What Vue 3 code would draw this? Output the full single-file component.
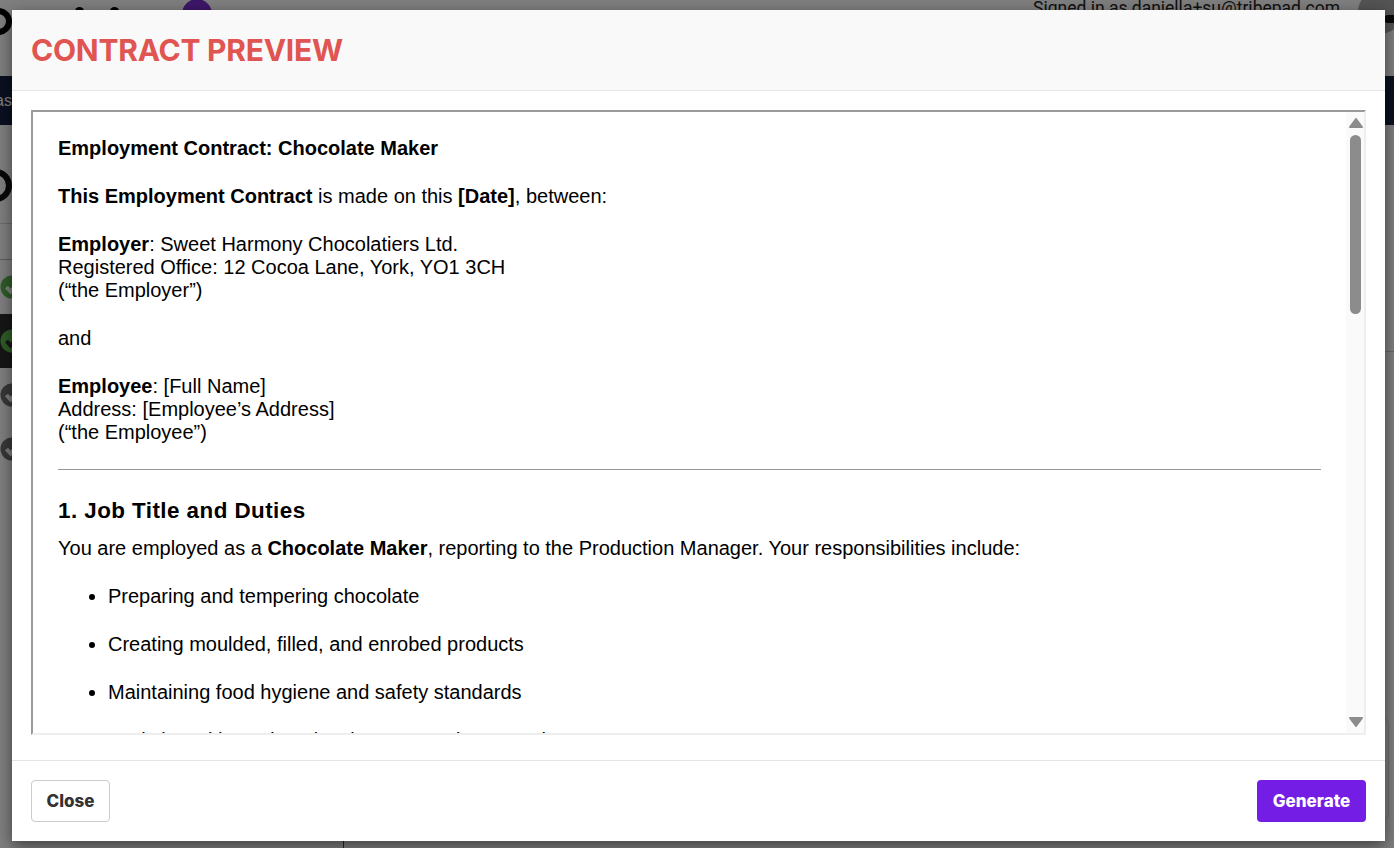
<script setup>
const duties = [
  'Preparing and tempering chocolate',
  'Creating moulded, filled, and enrobed products',
  'Maintaining food hygiene and safety standards',
  'Assisting with product development and seasonal ranges'
]
const ticks = [
  { dark: false, color: '#5fb84f' },
  { dark: true, color: '#5fb84f' },
  { dark: false, color: '#707070' },
  { dark: false, color: '#707070' }
]
</script>

<template>
  <div class="page">
    <header class="topbar">
      <span class="logo"></span>
      <span class="dot dot-a"></span>
      <span class="dot dot-b"></span>
      <span class="avatar"></span>
      <span class="signed">Signed in as daniella+su@tribepad.com</span>
      <span class="user"><span class="shoulders"></span></span>
    </header>
    <nav class="navbar"><span class="nav-text">as</span></nav>
    <div class="side">
      <div class="big-ring"></div>
      <div class="rule first"></div>
      <div class="rule second"></div>
      <div class="rows">
        <div v-for="(t, i) in ticks" :key="i" class="row" :class="{ dark: t.dark }">
          <svg width="28" height="28" viewBox="0 0 28 28" class="tick">
            <circle cx="12" cy="14" r="11.5" :fill="t.color"/>
            <path d="M6.5 14 L10.5 18.5 L19 9" fill="none" :stroke="t.dark ? '#2c2c2c' : '#ffffff'" stroke-width="4"/>
          </svg>
        </div>
      </div>
    </div>
    <div class="right-rule"></div>
    <div class="vline"></div>
    <div class="corner"></div>
    <div class="overlay"></div>

    <section class="modal">
      <div class="modal-head"><h1>CONTRACT PREVIEW</h1></div>
      <div class="modal-body">
        <div class="frame">
          <article class="doc">
            <p><b>Employment Contract: Chocolate Maker</b></p>
            <p><b>This Employment Contract</b> is made on this <b>[Date]</b>, between:</p>
            <p><b>Employer</b>: Sweet Harmony Chocolatiers Ltd.<br>Registered Office: 12 Cocoa Lane, York, YO1 3CH<br>(“the Employer”)</p>
            <p>and</p>
            <p><b>Employee</b>: [Full Name]<br>Address: [Employee’s Address]<br>(“the Employee”)</p>
            <hr>
            <h2>1. Job Title and Duties</h2>
            <p>You are employed as a <b>Chocolate Maker</b>, reporting to the Production Manager. Your responsibilities include:</p>
            <ul>
              <li v-for="d in duties" :key="d">{{ d }}</li>
            </ul>
          </article>
          <div class="scrollbar">
            <svg class="arrow" width="14" height="10" viewBox="0 0 14 10"><path d="M7 1 L13 9 H1 Z" fill="#8c8c8c" stroke="#8c8c8c" stroke-width="2" stroke-linejoin="round"/></svg>
            <div class="track"><div class="thumb"></div></div>
            <svg class="arrow" width="14" height="10" viewBox="0 0 14 10"><path d="M1 1 H13 L7 9 Z" fill="#8c8c8c" stroke="#8c8c8c" stroke-width="2" stroke-linejoin="round"/></svg>
          </div>
        </div>
      </div>
      <div class="modal-foot">
        <button class="btn close">Close</button>
        <button class="btn generate">Generate</button>
      </div>
    </section>
  </div>
</template>

<style>
html, body { margin: 0; overflow: hidden; }
</style>

<style scoped>
.page { position: relative; width: 1394px; height: 848px; overflow: hidden; background: #fff; font-family: "Liberation Sans", Arial, sans-serif; }
.topbar { height: 76px; position: relative; }
.logo { position: absolute; left: -15px; top: 8px; width: 15px; height: 15px; border: 6px solid #000; border-radius: 50%; }
.dot { position: absolute; top: 7px; width: 9px; height: 9px; background: #000; border-radius: 50%; }
.dot-a { left: 75px; }
.dot-b { left: 110px; }
.avatar { position: absolute; left: 182px; top: -1px; width: 30px; height: 30px; background: #7a2ed0; border-radius: 50%; }
.signed { position: absolute; left: 1033px; top: -2px; font-family: Roboto, sans-serif; font-size: 17.5px; line-height: 20px; color: #222; white-space: nowrap; }
.user { position: absolute; left: 1358px; top: -10px; width: 44px; height: 44px; background: #a8a8a8; border-radius: 50%; overflow: hidden; }
.shoulders { position: absolute; left: 26px; top: 25px; width: 18px; height: 8px; background: #111; border-radius: 4px 0 0 4px; }
.navbar { height: 49px; background: #142040; color: #fff; font-size: 16px; line-height: 49px; }
.nav-text { margin-left: -5px; }
.side { position: relative; }
.big-ring { position: absolute; left: -21px; top: 44px; box-sizing: border-box; width: 33px; height: 33px; border: 6px solid #111; border-radius: 50%; }
.rule { position: absolute; left: 0; width: 100px; height: 1px; background: #d4d4d4; }
.first { top: 98px; }
.second { top: 134px; background: #bbb; }
.rows { position: absolute; left: 0; width: 100px; top: 135px; }
.row { height: 54px; display: flex; align-items: center; }
.row.dark { background: #2c2c2c; }
.tick { display: block; }
.right-rule { position: absolute; left: 1340px; right: 0; top: 351px; height: 1px; background: #ccc; }
.vline { position: absolute; left: 343px; top: 800px; bottom: 0; width: 1px; background: #444; }
.corner { position: absolute; left: 1360px; top: 718px; width: 29px; height: 102px; box-sizing: border-box; border: 1px solid #ddd; border-radius: 6px; }
.overlay { position: absolute; inset: 0; background: rgba(0, 0, 0, 0.5); }

.modal { position: absolute; left: 12px; top: 10px; width: 1373px; height: 831px; display: flex; flex-direction: column; background: #fff; box-shadow: 0 5px 15px rgba(0,0,0,.5); }
.modal-head { height: 80px; flex: none; display: flex; align-items: center; padding: 0 19px; background: #f9f9f9; border-bottom: 1px solid #e5e5e5; }
.modal-head h1 { margin: 0; font-family: Inter, sans-serif; font-size: 30px; font-weight: 700; letter-spacing: -.25px; color: #e05551; }
.modal-body { flex: 1; min-height: 0; padding: 19px 19px 25px; }
.frame { height: 100%; box-sizing: border-box; display: flex; border: 2px solid; border-color: #9a9a9a #eee #eee #9a9a9a; overflow: hidden; }
.doc { flex: 1; min-width: 0; padding: 25px 25px 0; font-size: 20px; line-height: 23px; color: #000; overflow: hidden; }
.doc p { margin: 0 0 25px; }
.doc hr { margin: 0 0 27px; border: 0; border-top: 1px solid #999; }
.doc h2 { margin: 0 0 12px; font-size: 22.4px; line-height: 28px; letter-spacing: .45px; }
.doc ul { margin: 0; padding-left: 50px; }
.doc li { margin-bottom: 25px; white-space: nowrap; }
.scrollbar { flex: none; width: 18px; display: flex; flex-direction: column; align-items: center; background: #fafafa; padding: 6px 0 6px 1px; box-sizing: border-box; }
.arrow { flex: none; }
.track { flex: 1; width: 11px; padding-top: 7px; }
.thumb { height: 179px; background: #8c8c8c; border-radius: 6px; }
.modal-foot { height: 81px; flex: none; box-sizing: border-box; display: flex; align-items: center; justify-content: space-between; padding: 0 19px; border-top: 1px solid #e5e5e5; }
.btn { height: 42px; border-radius: 4px; font-family: Inter, sans-serif; font-size: 17px; font-weight: 800; }
.close { width: 79px; background: #fff; border: 1px solid #ccc; color: #333; }
.generate { width: 109px; background: #731de5; border: 0; color: #fff; }
</style>
